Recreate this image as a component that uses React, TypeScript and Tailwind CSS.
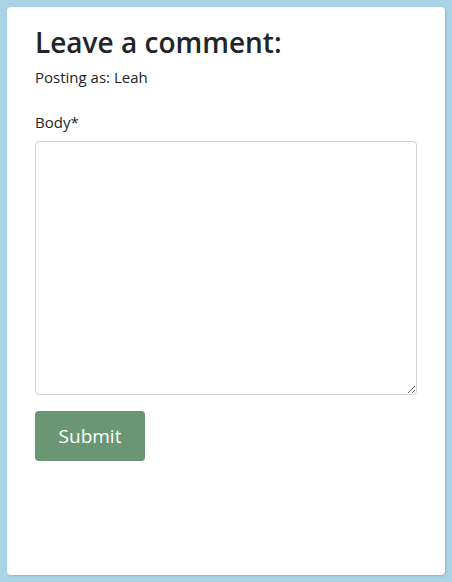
export default function App() {
  return (
    <div className="w-[452px] h-[582px] bg-[#abd3e6] p-[7px]" style={{ fontFamily: '"Open Sans", "Noto Sans", sans-serif' }}>
      <div className="h-[568px] bg-white rounded-[4px] shadow-[1px_1px_2px_rgba(0,0,0,0.15)] px-[28px] pt-[18px]">
        <h2 className="text-[28px] leading-[34px] font-semibold text-[#212529] mb-[6px]">Leave a comment:</h2>
        <p className="text-[15px] leading-[24px] text-[#212529]">Posting as: Leah</p>
        <label className="block mt-[21px] text-[15px] leading-[24px] text-[#212529]">Body*</label>
        <textarea className="block mt-[7px] w-[382px] h-[254px] border border-[#ced4da] rounded-[4px] resize-y outline-none" />
        <button className="mt-[16px] w-[110px] h-[50px] bg-[#6a9673] text-white text-[19px] rounded-[4px]">Submit</button>
      </div>
    </div>
  );
}
